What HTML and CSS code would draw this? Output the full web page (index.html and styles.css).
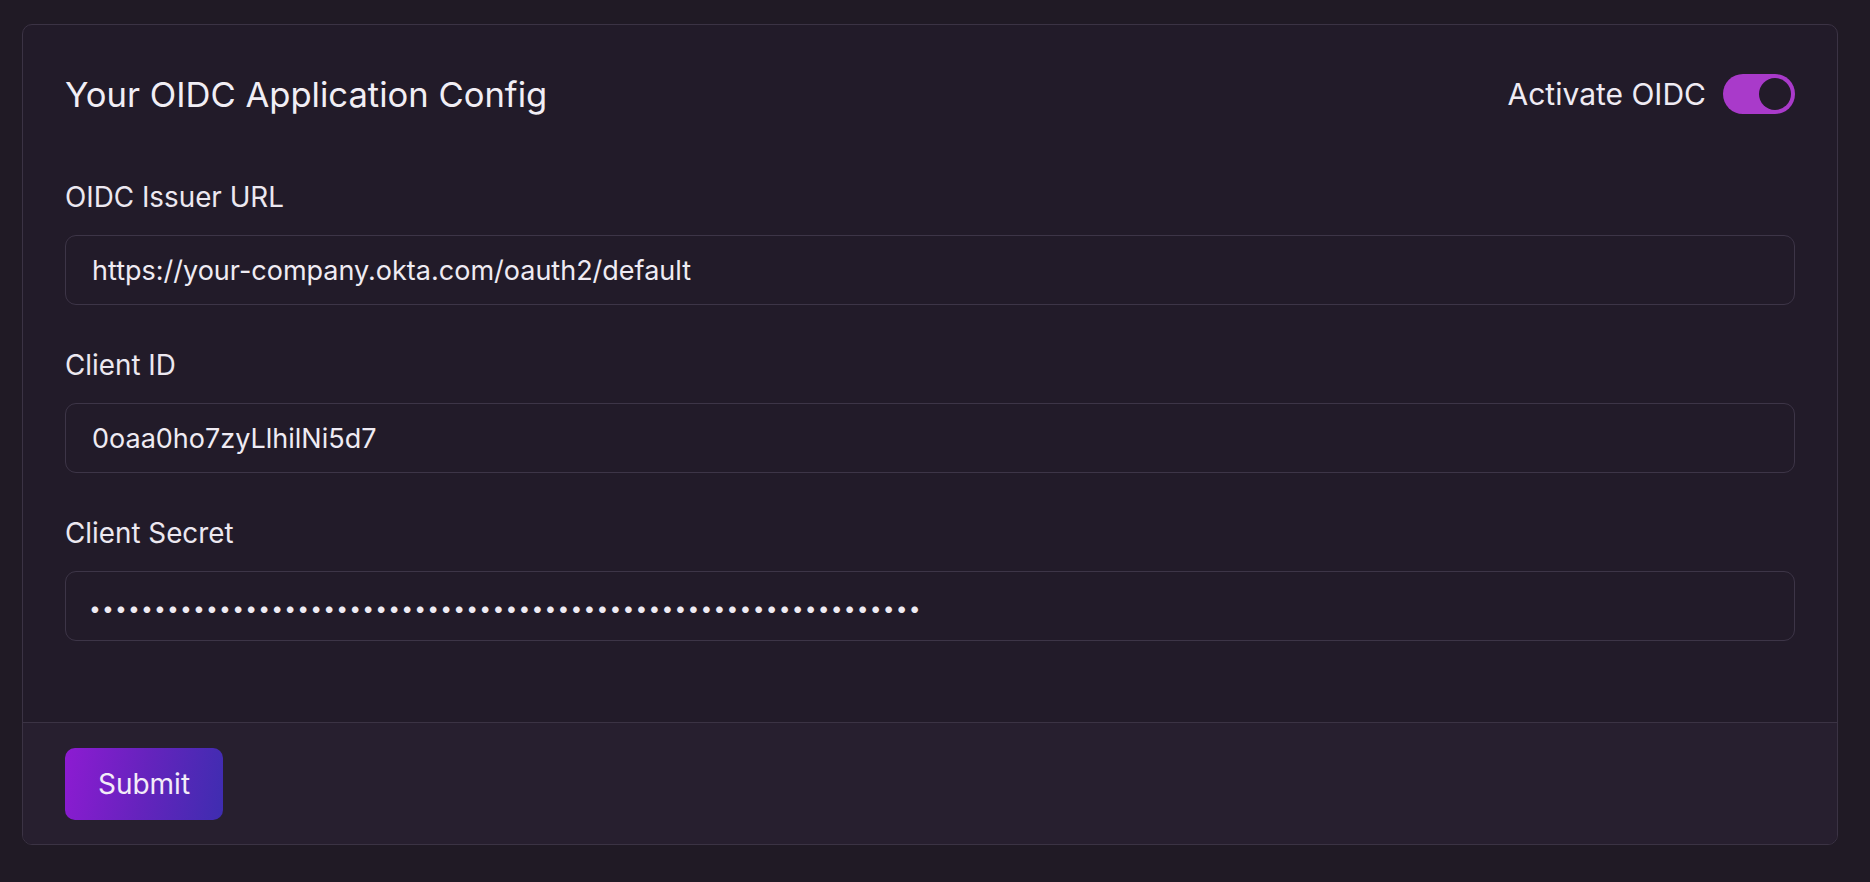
FILE: index.html
```html
<!DOCTYPE html>
<html lang="en">
<head>
<meta charset="utf-8">
<title>OIDC Config</title>
<link rel="stylesheet" href="styles.css">
</head>
<body>
<form class="card">
  <div class="card-body">
    <div class="card-header">
      <h2 class="title">Your OIDC Application Config</h2>
      <label class="switch-row">
        <span class="switch-label">Activate OIDC</span>
        <span class="switch"><span class="knob"></span></span>
      </label>
    </div>
    <div class="fields">
      <div class="field">
        <label class="field-label" for="issuer">OIDC Issuer URL</label>
        <input class="field-input" id="issuer" type="text" value="https://your-company.okta.com/oauth2/default">
      </div>
      <div class="field">
        <label class="field-label" for="client">Client ID</label>
        <input class="field-input" id="client" type="text" value="0oaa0ho7zyLlhilNi5d7">
      </div>
      <div class="field">
        <label class="field-label" for="secret">Client Secret</label>
        <input class="field-input secret" id="secret" type="password" value="abcdefghijklmnopqrstuvwxyzabcdefghijklmnopqrstuvwxyzabcdefghijkl">
      </div>
    </div>
  </div>
  <div class="card-footer">
    <button class="submit" type="button">Submit</button>
  </div>
</form>
</body>
</html>
```

FILE: styles.css
```css
* { box-sizing: border-box; }

html, body {
  margin: 0;
  background: #201a25;
}

body {
  padding: 24px 32px 24px 22px;
  font-family: "Inter", "Noto Sans", "Liberation Sans", sans-serif;
  color: #efebf3;
}

.card {
  display: block;
  width: 1816px;
  background: #221b29;
  border: 1px solid #3b3344;
  border-radius: 10px;
  overflow: hidden;
}

.card-body {
  padding: 49px 42px 81px;
}

.card-header {
  display: flex;
  align-items: center;
  justify-content: space-between;
  height: 40px;
}

.title {
  margin: 0;
  font-size: 34.6px;
  font-weight: 400;
  line-height: normal;
  color: #f1eef5;
}

.switch-row {
  display: flex;
  align-items: center;
  gap: 17px;
}

.switch-label {
  font-size: 30px;
  line-height: normal;
  color: #efebf3;
}

.switch {
  display: flex;
  align-items: center;
  justify-content: flex-end;
  width: 72px;
  height: 40px;
  padding: 4px;
  border-radius: 20px;
  background: #a93aca;
}

.knob {
  width: 32px;
  height: 32px;
  border-radius: 50%;
  background: #221b29;
}

.fields {
  display: flex;
  flex-direction: column;
  gap: 40px;
  margin-top: 63px;
}

.field {
  display: flex;
  flex-direction: column;
  gap: 18px;
}

.field-label {
  font-size: 27.8px;
  line-height: 40px;
  color: #ece8f0;
}

.field-input {
  width: 100%;
  height: 70px;
  padding: 0 26px;
  background: #221b29;
  border: 1px solid #3d3547;
  border-radius: 11px;
  font-family: "Inter", "Noto Sans", "Liberation Sans", sans-serif;
  font-size: 27px;
  color: #efebf3;
  outline: none;
}

.field-input.secret {
  font-size: 21px;
  letter-spacing: 1.2px;
  padding: 4px 26px 0 23px;
}

.card-footer {
  padding: 25px 42px 24px;
  background: #271f2f;
  border-top: 1px solid #3b3344;
}

.submit {
  display: flex;
  align-items: center;
  justify-content: center;
  width: 158px;
  height: 72px;
  border: none;
  border-radius: 10px;
  background: linear-gradient(100deg, #8d1bd2 0%, #6523bd 50%, #3e2db0 100%);
  font-family: "Inter", "Noto Sans", "Liberation Sans", sans-serif;
  font-size: 28px;
  color: #f3ecf8;
  cursor: pointer;
}
```
